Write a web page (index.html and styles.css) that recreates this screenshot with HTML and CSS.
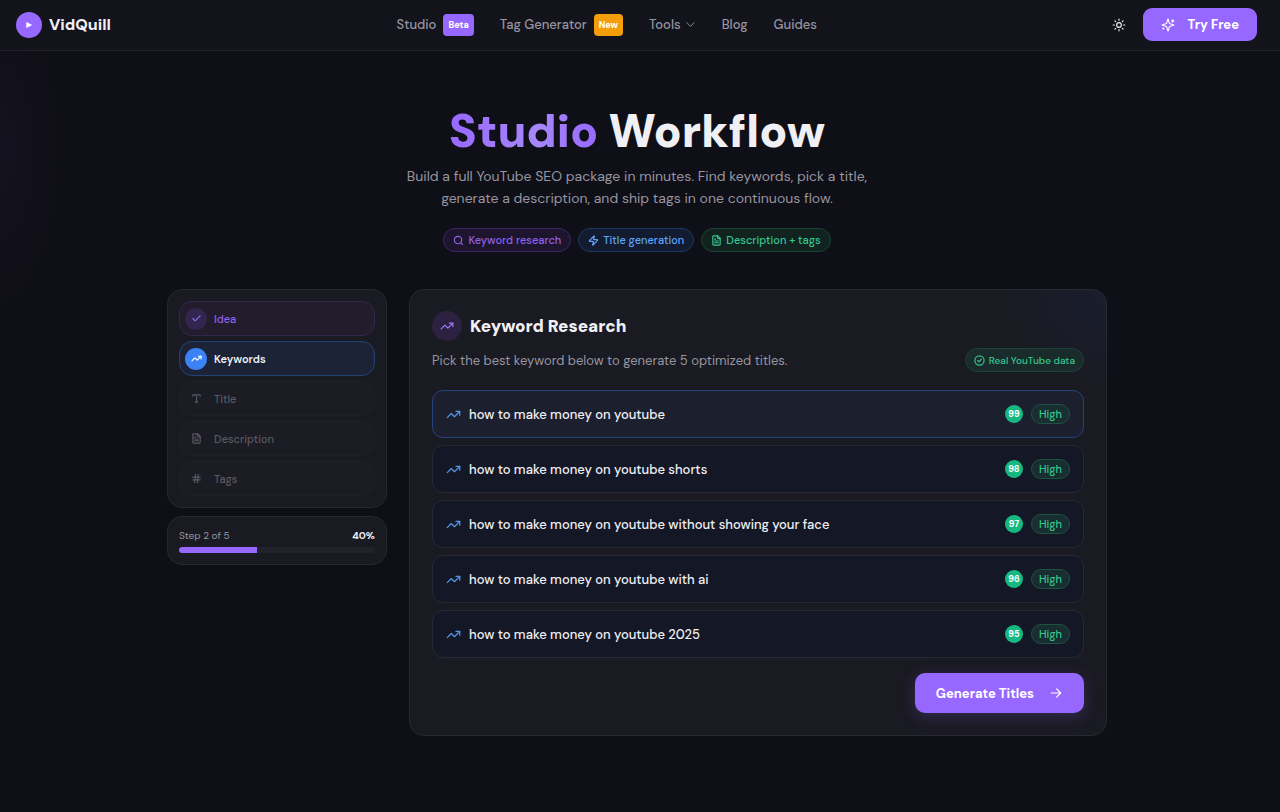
FILE: index.html
```
<!DOCTYPE html>
<html lang="en">
<head>
    <meta charset="UTF-8">
    <meta name="viewport" content="width=device-width, initial-scale=1.0">
    <title>Studio Workflow - VidQuill</title>
    <link rel="stylesheet" href="styles.css">
</head>
<body>

    <!-- shared icons -->
    <svg class="sprite" aria-hidden="true">
        <symbol id="i-trend" viewBox="0 0 24 24"><path d="M22 7l-8.500 8.500-5-5L2 17"/><path d="M16 7h6v6"/></symbol>
        <symbol id="i-file" viewBox="0 0 24 24"><path d="M15 2H6a2 2 0 0 0-2 2v16a2 2 0 0 0 2 2h12a2 2 0 0 0 2-2V7z"/><path d="M14 2v4a2 2 0 0 0 2 2h4M10 9H8M16 13H8M16 17H8"/></symbol>
        <symbol id="i-check" viewBox="0 0 24 24"><path d="M20 6L9 17l-5-5"/></symbol>
    </svg>

    <header class="header">
        <a href="#" class="logo">
            <span class="logo-mark"><svg viewBox="0 0 24 24"><path d="M4 3v18l18-9z"/></svg></span>
            VidQuill
        </a>
        <nav class="nav">
            <a href="#">Studio <span class="tag tag-beta">Beta</span></a>
            <a href="#">Tag Generator <span class="tag tag-new">New</span></a>
            <button type="button" class="nav-button">Tools
                <svg class="icon icon-chevron" viewBox="0 0 24 24"><path d="M4 8l8 8 8-8"/></svg>
            </button>
            <a href="#">Blog</a>
            <a href="#">Guides</a>
        </nav>
        <div class="header-actions">
            <button type="button" class="theme-button" aria-label="Toggle theme">
                <svg class="icon" viewBox="0 0 24 24"><circle cx="12" cy="12" r="4"/><path d="M12 2v2M12 20v2M4.930 4.930l1.410 1.410M17.660 17.660l1.410 1.410M2 12h2M20 12h2M6.340 17.660l-1.410 1.410M19.070 4.930l-1.410 1.410"/></svg>
            </button>
            <a href="#" class="btn btn-try">
                <svg class="icon" viewBox="0 0 24 24"><path d="M9.940 15.500A2 2 0 0 0 8.500 14.060l-6.140-1.580a.5.5 0 0 1 0-.96L8.500 9.940A2 2 0 0 0 9.940 8.500l1.580-6.140a.5.5 0 0 1 .96 0L14.060 8.500A2 2 0 0 0 15.500 9.940l6.140 1.580a.5.5 0 0 1 0 .96L15.500 14.060a2 2 0 0 0-1.440 1.440l-1.580 6.140a.5.5 0 0 1-.96 0z"/><path d="M20 3v4M22 5h-4M4 17v2M5 18H3"/></svg>
                Try Free
            </a>
        </div>
    </header>

    <main>
        <section class="hero">
            <h1><span class="accent">Studio</span> Workflow</h1>
            <p>Build a full YouTube SEO package in minutes. Find keywords, pick a title, generate a description, and ship tags in one continuous flow.</p>
            <div class="pills">
                <span class="pill pill-purple">
                    <svg class="icon" viewBox="0 0 24 24"><circle cx="11" cy="11" r="8"/><path d="M21 21l-4.300-4.300"/></svg>
                    Keyword research
                </span>
                <span class="pill pill-blue">
                    <svg class="icon" viewBox="0 0 24 24"><path d="M4 14a1 1 0 0 1-.78-1.630l9.900-10.200a.5.5 0 0 1 .86.460l-1.920 6.020A1 1 0 0 0 13 10h7a1 1 0 0 1 .78 1.630l-9.900 10.200a.5.5 0 0 1-.86-.460l1.920-6.020A1 1 0 0 0 11 14z"/></svg>
                    Title generation
                </span>
                <span class="pill pill-green">
                    <svg class="icon"><use href="#i-file"/></svg>
                    Description + tags
                </span>
            </div>
        </section>

        <div class="workspace">
            <aside class="sidebar">
                <nav class="card steps" aria-label="Workflow steps">
                    <button type="button" class="step step-done">
                        <span class="step-icon"><svg class="icon"><use href="#i-check"/></svg></span>Idea
                    </button>
                    <button type="button" class="step step-current" aria-current="step">
                        <span class="step-icon"><svg class="icon"><use href="#i-trend"/></svg></span>Keywords
                    </button>
                    <button type="button" class="step" disabled>
                        <span class="step-icon"><svg class="icon" viewBox="0 0 24 24"><path d="M4 7V4h16v3M9 20h6M12 4v16"/></svg></span>Title
                    </button>
                    <button type="button" class="step" disabled>
                        <span class="step-icon"><svg class="icon"><use href="#i-file"/></svg></span>Description
                    </button>
                    <button type="button" class="step" disabled>
                        <span class="step-icon"><svg class="icon" viewBox="0 0 24 24"><path d="M4 9h16M4 15h16M10 3L8 21M16 3l-2 18"/></svg></span>Tags
                    </button>
                </nav>
                <div class="card progress">
                    <div class="progress-text"><span>Step 2 of 5</span><strong>40%</strong></div>
                    <div class="progress-track"><div class="progress-fill" style="width: 40%"></div></div>
                </div>
            </aside>

            <section class="card panel">
                <div class="panel-title">
                    <span class="panel-icon"><svg class="icon"><use href="#i-trend"/></svg></span>
                    <h2>Keyword Research</h2>
                </div>
                <div class="panel-intro">
                    <p>Pick the best keyword below to generate 5 optimized titles.</p>
                    <span class="pill pill-green">
                        <svg class="icon" viewBox="0 0 24 24"><circle cx="12" cy="12" r="10"/><path d="M8 12l3 3 5-6"/></svg>
                        Real YouTube data
                    </span>
                </div>
                <div class="keywords">
                    <button type="button" class="keyword selected">
                        <svg class="icon"><use href="#i-trend"/></svg>
                        <span class="keyword-text">how to make money on youtube</span>
                        <span class="score">99</span><span class="level">High</span>
                    </button>
                    <button type="button" class="keyword">
                        <svg class="icon"><use href="#i-trend"/></svg>
                        <span class="keyword-text">how to make money on youtube shorts</span>
                        <span class="score">98</span><span class="level">High</span>
                    </button>
                    <button type="button" class="keyword">
                        <svg class="icon"><use href="#i-trend"/></svg>
                        <span class="keyword-text">how to make money on youtube without showing your face</span>
                        <span class="score">97</span><span class="level">High</span>
                    </button>
                    <button type="button" class="keyword">
                        <svg class="icon"><use href="#i-trend"/></svg>
                        <span class="keyword-text">how to make money on youtube with ai</span>
                        <span class="score">96</span><span class="level">High</span>
                    </button>
                    <button type="button" class="keyword">
                        <svg class="icon"><use href="#i-trend"/></svg>
                        <span class="keyword-text">how to make money on youtube 2025</span>
                        <span class="score">95</span><span class="level">High</span>
                    </button>
                </div>
                <div class="panel-actions">
                    <button type="button" class="btn btn-generate">
                        Generate Titles
                        <svg class="icon" viewBox="0 0 24 24"><path d="M4 12h16M13 5l7 7-7 7"/></svg>
                    </button>
                </div>
            </section>
        </div>
    </main>

</body>
</html>
```
FILE: styles.css
```
:root {
    --bg: #0f0f17;
    --card: #1a1a22;
    --line: #282830;
    --text: #f0eff4;
    --muted: #9795a0;
    --purple: #9768ff;
    --blue: #3b82f6;
    --green: #34c88f;
}

* {
    box-sizing: border-box;
}

body {
    margin: 0;
    padding-right: 6px;
    min-height: 100vh;
    background: radial-gradient(ellipse 60px 160px at 0 150px, #15121f, transparent) var(--bg);
    color: var(--text);
    font-family: "DM Sans", Inter, sans-serif;
    font-size: 13px;
}

a {
    color: inherit;
    text-decoration: none;
}

button {
    font: inherit;
    color: inherit;
    background: none;
    border: 0;
    padding: 0;
    cursor: pointer;
}

h1, h2, p {
    margin: 0;
}

.sprite {
    display: none;
}

.icon {
    width: 14px;
    height: 14px;
    flex: none;
    fill: none;
    stroke: currentColor;
    stroke-width: 2;
    stroke-linecap: round;
    stroke-linejoin: round;
}

/* --- header --- */
.header {
    display: flex;
    justify-content: space-between;
    align-items: center;
    height: 51px;
    margin-right: -6px;
    padding: 0 23px 1px 16px;
    background: #13131b;
    border-bottom: 1px solid #22222a;
}

.logo {
    display: flex;
    align-items: center;
    gap: 7px;
    font-size: 16px;
    font-weight: 800;
}

.logo-mark {
    display: grid;
    place-items: center;
    width: 26px;
    height: 26px;
    border-radius: 50%;
    background: var(--purple);
}

.logo-mark svg {
    width: 8px;
    height: 8px;
    fill: #fff;
}

.nav {
    display: flex;
    align-items: center;
    gap: 26px;
    color: var(--muted);
    font-weight: 500;
}

.nav a, .nav-button {
    display: flex;
    align-items: center;
    gap: 7px;
}

.nav-button {
    gap: 4px;
}

.icon-chevron {
    width: 11px;
    height: 11px;
}

.tag {
    padding: 0 5px;
    border-radius: 4px;
    color: #fff;
    font-size: 9px;
    font-weight: 800;
    line-height: 22px;
}

.tag-beta {
    background: var(--purple);
}

.tag-new {
    background: #f59e0b;
}

.header-actions {
    display: flex;
    align-items: center;
    gap: 8px;
}

.theme-button {
    display: grid;
    place-items: center;
    width: 32px;
    height: 32px;
}

.btn {
    display: flex;
    align-items: center;
    color: #fff;
    background: var(--purple);
    font-weight: 700;
}

.btn-try {
    gap: 13px;
    height: 33px;
    padding: 0 18px;
    border-radius: 9px;
}

/* --- hero --- */
.hero {
    display: flex;
    flex-direction: column;
    align-items: center;
    padding: 56px 16px 37px;
    text-align: center;
}

.hero h1 {
    font-size: 46px;
    font-weight: 900;
    line-height: 48px;
}

.accent {
    color: transparent;
    background: linear-gradient(90deg, #9768ff, #a688fa 60%, #9768ff);
    background-clip: text;
    -webkit-background-clip: text;
}

.hero p {
    max-width: 480px;
    margin: 10px 0 19px;
    color: var(--muted);
    font-size: 14px;
    line-height: 22px;
}

.pills {
    display: flex;
    gap: 7px;
}

.pill {
    display: flex;
    align-items: center;
    gap: 4px;
    height: 24px;
    padding: 0 9px;
    border: 1px solid;
    border-radius: 12px;
    font-size: 11px;
    font-weight: 500;
    white-space: nowrap;
}

.pill .icon {
    width: 11px;
    height: 11px;
    stroke-width: 2.5;
}

.pill-purple {
    color: #9161e8;
    background: #1d152e;
    border-color: #3c2763;
}

.pill-blue {
    color: #60a5fa;
    background: #121b30;
    border-color: #1d3761;
}

.pill-green {
    color: var(--green);
    background: #10231f;
    border-color: #174434;
}

/* --- workspace --- */
.workspace {
    display: grid;
    grid-template-columns: 220px 1fr;
    align-items: start;
    gap: 22px;
    max-width: 940px;
    margin: 0 auto;
}

.card {
    background: var(--card);
    border: 1px solid var(--line);
    border-radius: 15px;
}

.sidebar {
    display: grid;
    gap: 8px;
}

.steps {
    display: grid;
    gap: 5px;
    padding: 11px;
}

.step {
    display: flex;
    align-items: center;
    gap: 7px;
    height: 35px;
    padding: 0 5px;
    border: 1px solid #202028;
    border-radius: 13px;
    background: #1c1c24;
    color: #5a5963;
    font-size: 11px;
    font-weight: 500;
}

.step-icon {
    display: grid;
    place-items: center;
    width: 22px;
    height: 22px;
    border-radius: 50%;
}

.step-icon .icon {
    width: 11px;
    height: 11px;
    stroke-width: 2.5;
}

.step-done {
    color: #9161e8;
    background: #221c2d;
    border-color: #35264f;
}

.step-done .step-icon {
    background: #32264f;
}

.step-current {
    color: var(--text);
    background: #1c2337;
    border-color: #234374;
    font-weight: 600;
}

.step-current .step-icon {
    color: #fff;
    background: var(--blue);
}

.progress {
    padding: 11px;
}

.progress-text {
    display: flex;
    justify-content: space-between;
    color: var(--muted);
    font-size: 10px;
    line-height: 15px;
}

.progress-text strong {
    color: var(--text);
    font-weight: 800;
}

.progress-track {
    height: 6px;
    margin-top: 4px;
    border-radius: 3px;
    background: #22222a;
    overflow: hidden;
}

.progress-fill {
    height: 100%;
    background: var(--purple);
}

/* --- keyword panel --- */
.panel {
    padding: 21px 22px 22px;
    background: radial-gradient(circle at 100% 0, #191d2e, transparent 100px) var(--card);
}

.panel-title {
    display: flex;
    align-items: center;
    gap: 8px;
}

.panel-title h2 {
    font-size: 17px;
    font-weight: 900;
}

.panel-icon {
    display: grid;
    place-items: center;
    width: 30px;
    height: 30px;
    border-radius: 50%;
    color: #a47bff;
    background: #2c2140;
}

.panel-intro {
    display: flex;
    justify-content: space-between;
    align-items: center;
    margin: 7px 0 18px;
    color: var(--muted);
}

.panel-intro .pill {
    padding: 0 8px;
    background: #1a2b2b;
    border-color: #1c4238;
    font-size: 10px;
}

.keywords {
    display: grid;
    gap: 7px;
}

.keyword {
    display: flex;
    align-items: center;
    gap: 8px;
    height: 48px;
    padding: 0 13px;
    border: 1px solid #272933;
    border-radius: 11px;
    background: #141725;
    text-align: left;
}

.keyword.selected {
    background: #1c1f2d;
    border-color: #25437b;
}

.keyword .icon {
    width: 15px;
    height: 15px;
    color: #5296e8;
}

.keyword-text {
    flex: 1;
    font-weight: 500;
}

.score {
    width: 18px;
    border-radius: 50%;
    color: #fff;
    background: #15b881;
    font-size: 9px;
    font-weight: 700;
    line-height: 18px;
    text-align: center;
}

.level {
    padding: 0 7px;
    border: 1px solid #1d5343;
    border-radius: 10px;
    color: var(--green);
    background: #182e30;
    font-size: 11px;
    font-weight: 500;
    line-height: 18px;
}

.panel-actions {
    display: flex;
    justify-content: flex-end;
    margin-top: 15px;
}

.btn-generate {
    gap: 15px;
    height: 40px;
    padding: 0 21px;
    border-radius: 10px;
    box-shadow: 0 4px 16px rgba(151, 104, 255, 0.22);
}
```
